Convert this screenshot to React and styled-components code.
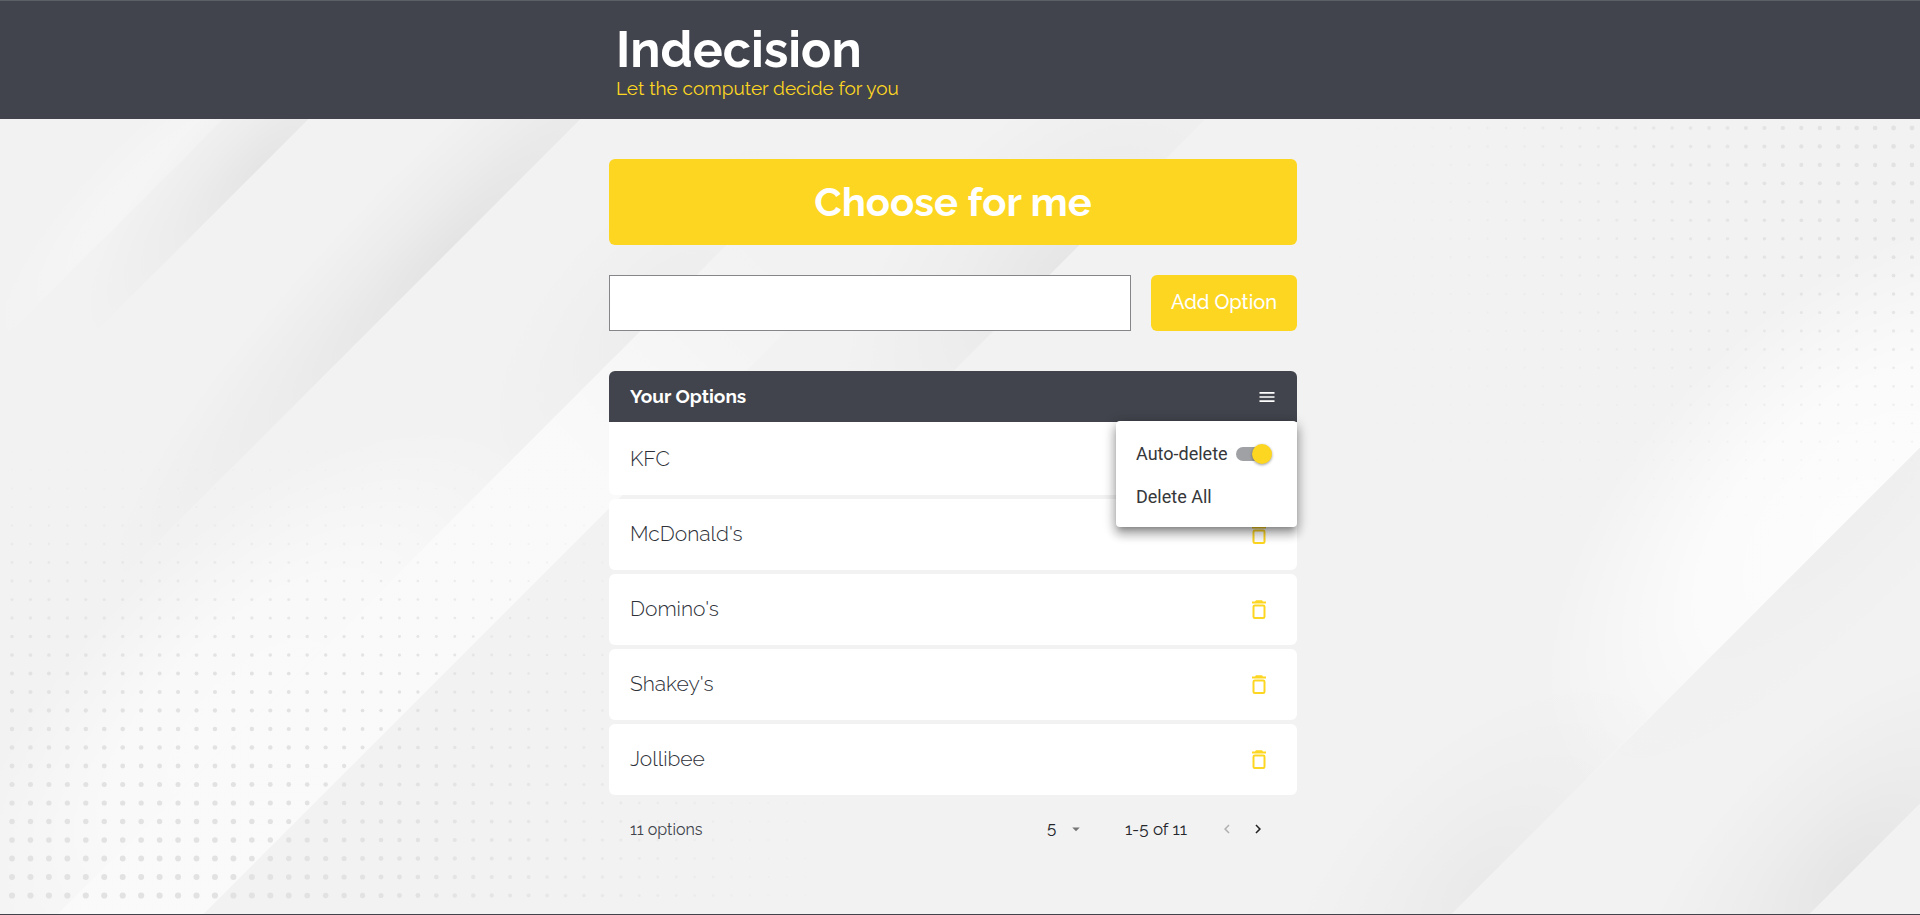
import React, { useState } from "react";
import styled, { createGlobalStyle, css } from "styled-components";

const dark = "#41444c";
const yellow = "#fdd622";
const display = `Raleway, Lato, "Open Sans", sans-serif`;

const GlobalStyle = createGlobalStyle`
  * { box-sizing: border-box; }
  body {
    margin: 0;
    background: #f2f2f2;
    color: ${dark};
    font-family: ${display};
  }
  button, input, select { font-family: inherit; color: inherit; }
  button { border: 0; background: none; padding: 0; cursor: pointer; }
`;

const Page = styled.div`
  position: relative;
  isolation: isolate;
  display: flex;
  flex-direction: column;
  min-height: 100vh;
  border-bottom: 1px solid ${dark};
`;

const Backdrop = styled.svg`
  position: absolute;
  inset: 0;
  width: 100%;
  height: 100%;
  z-index: -1;
`;

const Header = styled.header`
  height: 119px;
  padding: 22px 14px 0 0;
  background: ${dark};
  border-top: 1px solid #5b5f66;
`;

const Container = styled.div`
  width: 100%;
  max-width: 720px;
  margin: 0 auto;
  padding: 0 ${(p) => p.$inset}px;
`;

const Title = styled.h1`
  margin: 0;
  color: #fff;
  font-size: 50px;
  line-height: 53px;
  font-weight: 700;
`;

const Subtitle = styled.h2`
  margin: 0;
  color: ${yellow};
  font-size: 19px;
  line-height: 24px;
  font-weight: 400;
`;

const Main = styled.main`
  flex: 1;
  padding: 40px 14px 40px 0;
`;

const filled = css`
  background: ${yellow};
  color: #fff;
  border-radius: 6px;
`;

const ChooseButton = styled.button`
  ${filled}
  width: 100%;
  height: 86px;
  padding-bottom: 2px;
  font-size: 40px;
  font-weight: 700;
`;

const AddForm = styled.form`
  display: flex;
  gap: 20px;
  margin: 30px 0 40px;
`;

const OptionInput = styled.input`
  flex: 1;
  min-width: 0;
  height: 56px;
  padding: 0 16px;
  border: 1px solid #85868a;
  border-radius: 0;
  background: #fff;
  font-size: 20px;
`;

const AddButton = styled.button`
  ${filled}
  width: 146px;
  padding-bottom: 2px;
  font-size: 20px;
  font-weight: 500;
`;

const ListHeader = styled.div`
  position: relative;
  display: flex;
  align-items: center;
  justify-content: space-between;
  height: 51px;
  padding: 0 20px 0 21px;
  background: ${dark};
  color: #fff;
  border-radius: 6px 6px 0 0;
`;

const ListTitle = styled.h3`
  margin: 0;
  padding-bottom: 2px;
  font-size: 19px;
  font-weight: 700;
`;

const IconButton = styled.button`
  display: flex;
  color: ${(p) => p.$color};
`;

const Menu = styled.div`
  position: absolute;
  top: 50px;
  right: 0;
  width: 181px;
  padding: 11px 20px 9px;
  border-radius: 4px;
  background: #fff;
  color: #36373a;
  font-family: Roboto, sans-serif;
  font-size: 18px;
  box-shadow: 0 5px 5px -3px rgba(0, 0, 0, 0.2), 0 8px 10px 1px rgba(0, 0, 0, 0.14),
    0 3px 14px 2px rgba(0, 0, 0, 0.12), 0 4px 12px rgba(0, 0, 0, 0.2);
`;

const MenuRow = styled.div`
  display: flex;
  align-items: center;
  gap: 8px;
  height: 43px;
`;

const MenuAction = styled.button`
  font-size: 18px;
`;

const Switch = styled.input`
  appearance: none;
  position: relative;
  width: 34px;
  height: 14px;
  margin: 0;
  border-radius: 7px;
  background: #a0a1a5;
  cursor: pointer;

  &::before {
    content: "";
    position: absolute;
    top: -3px;
    left: ${(p) => (p.checked ? 16 : -2)}px;
    width: 20px;
    height: 20px;
    border-radius: 50%;
    background: ${yellow};
    box-shadow: 0 1px 3px rgba(0, 0, 0, 0.4);
  }
`;

const OptionList = styled.ul`
  display: flex;
  flex-direction: column;
  gap: 4px;
  margin: 0;
  padding: 0;
  list-style: none;
`;

const OptionRow = styled.li`
  display: flex;
  align-items: center;
  justify-content: space-between;
  height: 71px;
  padding: 0 26px 0 21px;
  border-radius: 6px;
  background: #fff;
  font-size: 21px;

  &:first-child {
    height: 73px;
    padding-top: 2px;
    border-radius: 0 0 6px 6px;
  }
`;

const OptionName = styled.span`
  padding-bottom: 2px;
  font-weight: 300;
  color: #2d3038;
`;

const Footer = styled.div`
  display: flex;
  align-items: center;
  height: 68px;
  padding: 0 30px 0 21px;
  font-size: 16px;
`;

const PageSize = styled.div`
  display: flex;
  align-items: center;
  margin-left: auto;
  margin-right: 40px;
  color: #757575;
`;

const PageSelect = styled.select`
  appearance: none;
  width: 20px;
  padding: 0 0 3px;
  border: 0;
  background: none;
  color: #26272c;
  font-size: 17px;
`;

const Range = styled.span`
  margin-right: 31px;
  color: #26272c;
  font-size: 17px;
`;

const Pager = styled.div`
  display: flex;
  gap: 13px;
`;

const Glyph = ({ size, d }) => (
  <svg width={size} height={size} viewBox="0 0 24 24" fill="currentColor" aria-hidden="true">
    <path d={d} />
  </svg>
);

const TrashIcon = () => (
  <svg width="24" height="24" viewBox="0 0 24 24" aria-hidden="true">
    <path d="M9 2.200h6l1 1.300h3v1.900H5V3.500h3z" fill="currentColor" />
    <rect x="6.500" y="7.500" width="11" height="12.500" rx="1.300" fill="none" stroke="currentColor" strokeWidth="2" />
  </svg>
);

/* Soft tone along the diagonal x + y = edge, kept to one side of it. */
const shades = [
  { edge: 343, x: 150, rx: 220, ry: 60, color: "#fff", opacity: 0.25 },
  { edge: 428, x: 260, rx: 240, ry: 80, color: "#000", opacity: 0.055 },
  { edge: 700, x: 450, rx: 480, ry: 95, color: "#000", opacity: 0.06 },
  { edge: 972, x: 250, rx: 380, ry: 180, color: "#fff", opacity: 0.65 },
  { edge: 972, x: 660, rx: 230, ry: 110, color: "#000", opacity: 0.025 },
  { edge: 1325, x: 1060, rx: 280, ry: 150, color: "#000", opacity: 0.05 },
  { edge: 2368, x: 1850, rx: 380, ry: 210, color: "#fff", opacity: 0.85 },
  { edge: 2366, x: 1480, rx: 260, ry: 140, color: "#000", opacity: 0.035 },
  { edge: 2368, x: 1850, rx: 400, ry: 100, color: "#000", opacity: 0.015, below: true },
  { edge: 2724, x: 1850, rx: 280, ry: 140, color: "#000", opacity: 0.055 },
];

function halfPlane({ edge, below }) {
  return below
    ? `${edge + 500},-500 ${edge + 3000},2500 -1000,${edge + 1000}`
    : `-1000,-1000 ${edge + 1000},-1000 -1000,${edge + 1000}`;
}

function makeDots() {
  const dots = [];
  for (let y = 896; y > 440; y -= 18.5) {
    for (let x = 12; x < 860; x += 18.45) {
      const v = (y - 430) / 466;
      const h = 1 - Math.max(0, x - 240) / 620;
      dots.push({ x, y, r: 0.7 + 2.4 * v * h, opacity: Math.min(1, v * 2) * Math.min(1, h * 1.4) });
    }
  }
  for (let y = 128.5; y < 540; y += 18.45) {
    for (let x = 1912; x > 1340; x -= 18.45) {
      const v = 1 - (y - 128) / 410;
      const h = (x - 1330) / 590;
      dots.push({ x, y, r: 0.8 + 1.7 * v * h, opacity: Math.min(1, v * 1.5) * Math.min(1, h * 1.3) });
    }
  }
  return dots;
}

const dots = makeDots();

function Background() {
  return (
    <Backdrop viewBox="0 0 1920 915" preserveAspectRatio="xMidYMid slice" aria-hidden="true">
      <defs>
        <linearGradient id="ribbon" gradientUnits="userSpaceOnUse" x1="210" y1="830" x2="780" y2="260">
          <stop offset="0" stopColor="#fff" stopOpacity="0.600" />
          <stop offset="0.650" stopColor="#fff" stopOpacity="0.600" />
          <stop offset="1" stopColor="#fff" stopOpacity="0" />
        </linearGradient>
        {shades.map((s, i) => (
          <React.Fragment key={i}>
            <radialGradient id={`tone${i}`}>
              <stop offset="0" stopColor={s.color} stopOpacity={s.opacity} />
              <stop offset="0.5" stopColor={s.color} stopOpacity={s.opacity * (s.color === "#fff" ? 0.8 : 0.4)} />
              <stop offset="1" stopColor={s.color} stopOpacity="0" />
            </radialGradient>
            <clipPath id={`side${i}`}>
              <polygon points={halfPlane(s)} />
            </clipPath>
          </React.Fragment>
        ))}
      </defs>
      <rect width="1920" height="915" fill="#f2f2f2" />
      <polygon points="972,0 1118,0 118,1000 -28,1000" fill="url(#ribbon)" />
      {shades.map((s, i) => (
        <g key={i} clipPath={`url(#side${i})`}>
          <ellipse
            cx={s.x}
            cy={s.edge - s.x}
            rx={s.rx}
            ry={s.ry}
            fill={`url(#tone${i})`}
            transform={`rotate(-45 ${s.x} ${s.edge - s.x})`}
          />
        </g>
      ))}
      {dots.map((d, i) => (
        <circle key={i} cx={d.x} cy={d.y} r={d.r} fill="#e2e2e2" opacity={d.opacity} />
      ))}
    </Backdrop>
  );
}

const options = ["KFC", "McDonald's", "Domino's", "Shakey's", "Jollibee"];

export default function App() {
  const [autoDelete, setAutoDelete] = useState(true);
  return (
    <Page>
      <GlobalStyle />
      <Background />
      <Header>
        <Container $inset={23}>
          <Title>Indecision</Title>
          <Subtitle>Let the computer decide for you</Subtitle>
        </Container>
      </Header>
      <Main>
        <Container $inset={16}>
          <ChooseButton type="button">Choose for me</ChooseButton>
          <AddForm onSubmit={(e) => e.preventDefault()}>
            <OptionInput type="text" aria-label="New option" />
            <AddButton type="submit">Add Option</AddButton>
          </AddForm>
          <ListHeader>
            <ListTitle>Your Options</ListTitle>
            <IconButton type="button" $color="#fff" aria-label="Menu">
              <Glyph size={20} d="M3 18h18v-2H3v2zm0-5h18v-2H3v2zm0-7v2h18V6H3z" />
            </IconButton>
            <Menu>
              <MenuRow as="label">
                Auto-delete
                <Switch
                  type="checkbox"
                  checked={autoDelete}
                  onChange={(e) => setAutoDelete(e.target.checked)}
                />
              </MenuRow>
              <MenuRow>
                <MenuAction type="button">Delete All</MenuAction>
              </MenuRow>
            </Menu>
          </ListHeader>
          <OptionList>
            {options.map((name) => (
              <OptionRow key={name}>
                <OptionName>{name}</OptionName>
                <IconButton type="button" $color={yellow} aria-label={`Delete ${name}`}>
                  <TrashIcon />
                </IconButton>
              </OptionRow>
            ))}
          </OptionList>
          <Footer>
            <span>11 options</span>
            <PageSize>
              <PageSelect aria-label="Options per page">
                <option>5</option>
              </PageSelect>
              <Glyph size={18} d="M7 10l5 5 5-5z" />
            </PageSize>
            <Range>1-5 of 11</Range>
            <Pager>
              <IconButton type="button" disabled $color="#b0b0b0" aria-label="Previous page">
                <Glyph size={18} d="M15.410 7.410L14 6l-6 6 6 6 1.410-1.410L10.830 12z" />
              </IconButton>
              <IconButton type="button" $color="#222" aria-label="Next page">
                <Glyph size={18} d="M10 6L8.590 7.410 13.170 12l-4.580 4.590L10 18l6-6z" />
              </IconButton>
            </Pager>
          </Footer>
        </Container>
      </Main>
    </Page>
  );
}
